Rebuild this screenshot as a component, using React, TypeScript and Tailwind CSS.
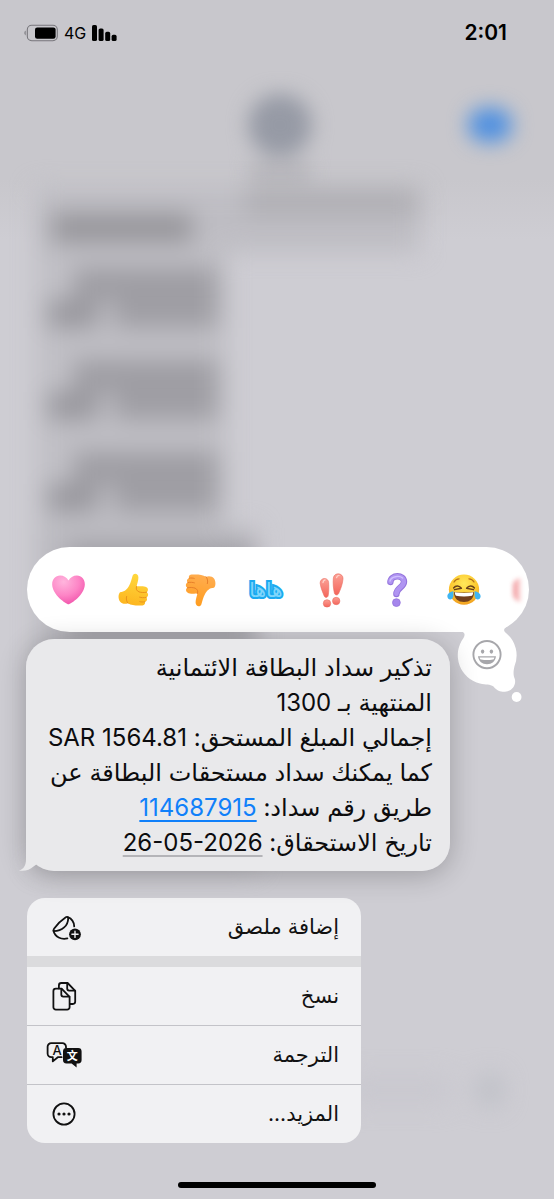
import type { ReactNode } from "react";

// ── Reaction drawings ────────────────────────────────────────────────
function HeartIcon() {
  return (
    <svg viewBox="0 0 36 36" className="h-[35px] w-[35px]" aria-hidden="true">
      <defs>
        <radialGradient id="heart" cx="35%" cy="22%" r="85%">
          <stop offset="0" stopColor="#ffb5dd" />
          <stop offset="0.55" stopColor="#fd85c6" />
          <stop offset="1" stopColor="#f04fa9" />
        </radialGradient>
      </defs>
      <path
        d="M18 33.2C15.6 33 1.2 23.4 1.2 12.6C1.2 7.2 4.7 3.6 9.3 3.6C13.2 3.6 16.4 5.7 18 8.8C19.6 5.7 22.8 3.6 26.7 3.6C31.3 3.6 34.8 7.2 34.8 12.6C34.8 23.4 20.4 33 18 33.2Z"
        fill="url(#heart)"
      />
    </svg>
  );
}

function ThumbShape({ id, from, to, shade }: { id: string; from: string; to: string; shade: string }) {
  return (
    <svg viewBox="0 0 36 36" className="h-9 w-9" aria-hidden="true">
      <defs>
        <linearGradient id={id} x1="0.6" y1="0" x2="0.4" y2="1">
          <stop offset="0" stopColor={from} />
          <stop offset="1" stopColor={to} />
        </linearGradient>
      </defs>
      <path
        d="M4 20.2C8.5 20 11 17.6 13.2 13.6C14.8 10.8 15.6 7 16.6 3.8C17.6 0.6 22.4 1.2 22.4 5.4C22.4 8.6 21.2 11.4 20.6 14.4C23.6 14.2 27 14.2 29.4 14.8C32.6 15.6 32.6 19.4 30.6 20.2C32.8 21.2 32.6 24.8 30.2 25.4C31.8 26.6 31 29.4 28.8 29.8C29.8 31.4 28.6 33.2 26.4 33.4C21.6 33.8 15.6 33.6 12 31.2C9 32.4 5.6 31.6 4 29.4C2.2 27 2 22.4 4 20.2Z"
        fill={`url(#${id})`}
      />
      <path
        d="M30.6 20.2C28 20.8 25.4 20.6 23.4 20M30.2 25.4C27.8 25.9 25.2 25.7 23.6 25.2M28.8 29.8C26.8 30.2 25 30 23.8 29.6M20.6 14.4C19.6 17 20.6 18.8 22.8 19.8M12 31.2C10.4 29.8 10 26.6 10.6 24.4"
        fill="none"
        stroke={shade}
        strokeWidth="1"
        strokeLinecap="round"
      />
    </svg>
  );
}

function ExclaimIcon() {
  return (
    <svg viewBox="0 0 36 36" className="h-9 w-9" aria-hidden="true">
      <defs>
        <linearGradient id="exclaim" x1="0" y1="0" x2="0" y2="1">
          <stop offset="0" stopColor="#fba095" />
          <stop offset="1" stopColor="#f4655b" />
        </linearGradient>
      </defs>
      <g fill="url(#exclaim)" stroke="#ea6d62" strokeWidth="0.6">
        <path d="M6.2 11.4C5.8 5.6 14 4.6 14.6 10.4C15 15.6 14.8 20.4 14.2 23.6C13.9 25.8 10.8 26 10.2 24C8.8 20.2 6.8 16.4 6.2 11.4Z" />
        <path d="M19.4 5.8C20.2 0 29.4 0.8 29 6.8C28.6 12.4 26.4 17.6 24.6 21.6C23.8 23.6 20.8 23.2 20.4 21.2C19.4 16.8 18.8 11.2 19.4 5.8Z" />
        <circle cx="13" cy="31.4" r="3.7" />
        <circle cx="22.2" cy="29" r="3.7" />
      </g>
      <path d="M9 10.5C9.2 8.8 10 8.2 11 8M22.6 5.6C23 4 24 3.4 25 3.4" stroke="#ffcfc7" strokeWidth="1.4" fill="none" strokeLinecap="round" />
    </svg>
  );
}

function QuestionIcon() {
  return (
    <svg viewBox="0 0 36 36" className="h-9 w-9" aria-hidden="true">
      <path d="M10.400 10C10.800 2.600 24 2.200 24 9.800C24 15.400 16.400 15.600 16.400 22" fill="none" stroke="#9474dc" strokeWidth="6.400" strokeLinecap="round" strokeLinejoin="round" />
      <path d="M10.400 9.800C10.800 2.800 23.800 2.400 23.800 9.800C23.800 15.200 16.400 15.400 16.400 21.800" fill="none" stroke="#b095f2" strokeWidth="4.600" strokeLinecap="round" strokeLinejoin="round" />
      <path d="M10 9C11 4.600 19 3 22.600 6" fill="none" stroke="#d0bfff" strokeWidth="1.400" strokeLinecap="round" />
      <circle cx="16.400" cy="30.600" r="3.900" fill="#a586ec" stroke="#9474dc" strokeWidth="0.800" />
    </svg>
  );
}

function JoyIcon() {
  return (
    <svg viewBox="0 0 36 36" className="h-[34px] w-[34px]" aria-hidden="true">
      <defs>
        <radialGradient id="joy" cx="50%" cy="30%" r="75%">
          <stop offset="0" stopColor="#ffe95a" />
          <stop offset="0.6" stopColor="#fcc72f" />
          <stop offset="1" stopColor="#ee961c" />
        </radialGradient>
      </defs>
      <circle cx="18" cy="17.6" r="16" fill="url(#joy)" />
      <path d="M7.4 9.6C8.6 7.4 10.6 6.2 12.8 6.2M28.6 9.6C27.4 7.4 25.4 6.2 23.2 6.2" stroke="#b8741a" strokeWidth="1.3" fill="none" strokeLinecap="round" />
      <path d="M7 15.8C9.2 13 12.8 13 15.2 16.2L8 17.600M29 15.800C26.800 13 23.200 13 20.800 16.200L28 17.600" stroke="#69411a" strokeWidth="1.600" fill="none" strokeLinecap="round" strokeLinejoin="round" />
      <path d="M7.4 20C13.8 21 22.2 21 28.6 20C28.8 27 24.2 30.6 18 30.6C11.8 30.6 7.2 27 7.4 20Z" fill="#72401d" />
      <path d="M8.2 20.4C14.2 21.4 21.8 21.4 27.8 20.4C27.6 22.6 27.2 23.6 26.4 24C21.4 25 14.6 25 9.6 24C8.8 23.6 8.4 22.6 8.2 20.4Z" fill="#fff" />
      <path d="M6.8 19.2C2.6 20 0.2 22 0.4 25C0.8 29.4 6.6 29 6.8 24.2ZM29.2 19.2C33.4 20 35.8 22 35.6 25C35.2 29.4 29.4 29 29.2 24.2Z" fill="#3fb5f2" />
    </svg>
  );
}

// ── Menu icons ───────────────────────────────────────────────────────
function MenuSvg({ children }: { children: ReactNode }) {
  return (
    <svg
      viewBox="0 0 40 40"
      className="h-10 w-10 shrink-0"
      fill="none"
      stroke="#111"
      strokeWidth="1.8"
      strokeLinecap="round"
      strokeLinejoin="round"
      aria-hidden="true"
    >
      {children}
    </svg>
  );
}

function StickerIcon() {
  return (
    <MenuSvg>
      <path d="M9.5 23.6C9.4 22.8 9.8 22.2 10.2 21.6C13.2 17.4 17.4 13.2 21.8 10.3C23 9.6 24.2 10 24.2 11.4C24 18.6 18.4 24 9.7 24.2" />
      <path d="M23.8 10.2C27.8 11.8 30 15.4 30.2 19.4M9.5 23.8C10.8 30 17.4 32.8 23.4 31.4" />
      <circle cx="31" cy="27.3" r="5.9" fill="#111" stroke="none" />
      <path d="M31 24.2V30.4M27.9 27.3H34.1" stroke="#f1f1f3" strokeWidth="1.4" />
    </MenuSvg>
  );
}

function CopyIcon() {
  return (
    <MenuSvg>
      <path d="M17.6 12.6H11.8A2.4 2.4 0 0 0 9.4 15V31.2A2.4 2.4 0 0 0 11.8 33.6H23.2A2.4 2.4 0 0 0 25.6 31.2V20.8Z" />
      <path d="M17.3 12.8V18.6A2 2 0 0 0 19.3 20.6H25.4" />
      <path d="M14.9 12.4V9.4A2.4 2.4 0 0 1 17.3 7H23.6L31.2 14.8V25.6A2.4 2.4 0 0 1 28.8 28H25.8" />
      <path d="M23.2 7.2V12.6A2 2 0 0 0 25.2 14.6H31" />
    </MenuSvg>
  );
}

function TranslateIcon() {
  return (
    <MenuSvg>
      <path d="M17.6 22.2H13.8L8.8 26.4V22.2H7.2A3.6 3.6 0 0 1 3.6 18.6V11.8A3.6 3.6 0 0 1 7.2 8.2H18.4A3.6 3.6 0 0 1 22 11.8V12.8" />
      <path
        d="M19 16.4A3.4 3.4 0 0 1 22.4 13H34.2A3.4 3.4 0 0 1 37.6 16.4V25A3.4 3.4 0 0 1 34.2 28.4H32.6V32.6L27.6 28.4H22.4A3.4 3.4 0 0 1 19 25Z"
        fill="#111"
        stroke="none"
      />
      <text x="13" y="20" textAnchor="middle" fontSize="13" fontWeight="500" fill="#111" stroke="none" fontFamily="Inter, sans-serif">A</text>
      <text x="28.2" y="25" textAnchor="middle" fontSize="11" fontWeight="700" fill="#fff" stroke="none" fontFamily="'Noto Sans CJK SC', sans-serif">文</text>
    </MenuSvg>
  );
}

function MoreIcon() {
  return (
    <MenuSvg>
      <circle cx="20" cy="20" r="10.6" />
      <g fill="#111" stroke="none">
        <circle cx="15" cy="20" r="1.6" />
        <circle cx="20" cy="20" r="1.6" />
        <circle cx="25" cy="20" r="1.6" />
      </g>
    </MenuSvg>
  );
}

// ── Blurred conversation behind the menu ─────────────────────────────
function Backdrop() {
  return (
    <div className="absolute inset-0 overflow-hidden bg-linear-to-b from-[#c8c7cc] from-15% to-[#cecdd3] to-20%" aria-hidden="true">
      <div className="flex h-[188px] items-start justify-between px-[38px] pt-[94px] blur-[10px]">
        <div className="w-[54px]" />
        <div className="flex flex-col items-center">
          <div className="h-[62px] w-[64px] rounded-full bg-[#969aa5]" />
          <div className="mt-1 h-7 w-[60px] bg-[#b8b7bc]" />
        </div>
        <div className="mt-[14px] mr-1 h-[34px] w-[44px] rounded-full bg-[#4f90e0]" />
      </div>
      <div className="px-9 blur-[12px]">
        <div className="h-[64px] w-[384px] bg-[#bebdc3]">
          <div className="ml-auto h-[26px] w-[175px] bg-[#aeadb2]" />
          <div className="ml-4 h-7 w-[140px] bg-[#959499]" />
        </div>
        {[0, 1, 2].map((n) => (
          <div key={n} className="flex h-[92px] w-[190px] flex-col items-end bg-[#c0bfc5] px-2 pt-4">
            <div className="h-8 w-[144px] bg-[#9e9da3]" />
            <div className="flex h-7 gap-4">
              <div className="w-[50px] bg-[#98979d]" />
              <div className="w-[104px] bg-[#9f9ea4]" />
            </div>
          </div>
        ))}
        <div className="h-[340px] w-[220px] bg-[#bbbac0] pt-4 pl-8">
          <div className="h-24 bg-[#9f9ea4]" />
        </div>
        <div className="mt-[206px] flex items-center justify-end gap-6">
          <div className="h-7 w-[110px] rounded-full bg-[#c9c8cf]" />
          <div className="mr-4 h-8 w-6 rounded-full bg-[#bcbec5]" />
        </div>
      </div>
    </div>
  );
}

function StatusBar() {
  return (
    <header className="flex h-[66px] items-center justify-between pr-[47px] pl-6">
      <div className="flex items-center gap-[6px]">
        <svg viewBox="0 0 34 18" className="h-[18px] w-[34px]" role="img" aria-label="Battery">
          <path d="M1.6 6.6C0 7.6 0 10.4 1.6 11.4Z" fill="#77767b" />
          <rect x="3.3" y="1.3" width="30" height="15.4" rx="4.4" fill="none" stroke="#77767b" strokeWidth="1.1" />
          <rect x="11" y="3.4" width="20.600" height="11.4" rx="2.2" fill="#000" />
        </svg>
        <span className="text-[16px] leading-5">4G</span>
        <svg viewBox="0 0 26 18" className="h-[18px] w-[26px]" role="img" aria-label="Signal">
          <rect x="0" y="1" width="5" height="16" rx="1.6" />
          <rect x="6.6" y="4.4" width="5" height="12.6" rx="1.6" />
          <rect x="13.2" y="7.8" width="5" height="9.2" rx="1.6" />
          <rect x="19.6" y="10.8" width="5" height="6.2" rx="1.6" />
        </svg>
      </div>
      <time className="text-[21px] leading-6 font-semibold">2:01</time>
    </header>
  );
}

const REACTIONS: { label: string; icon: ReactNode }[] = [
  { label: "قلب", icon: <HeartIcon /> },
  { label: "إعجاب", icon: <ThumbShape id="up" from="#ffd83d" to="#fdb51f" shade="#ea941b" /> },
  { label: "عدم إعجاب", icon: <span className="rotate-180"><ThumbShape id="down" from="#ff9d1f" to="#ffad50" shade="#e8802a" /></span> },
  {
    label: "هاها",
    icon: (
      <span className="text-[20px] leading-9 text-[#7fd6fb] [-webkit-text-stroke:4px_#1aaaf0] [paint-order:stroke_fill]" dir="rtl">
        هاها
      </span>
    ),
  },
  { label: "تعجب", icon: <ExclaimIcon /> },
  { label: "استفهام", icon: <QuestionIcon /> },
  { label: "ضحك", icon: <JoyIcon /> },
];

function ReactionBar() {
  return (
    <div className="relative mr-[25px] ml-[27px]">
      <div className="flex h-[85px] items-center overflow-hidden rounded-full bg-white pl-2">
        {REACTIONS.map((r) => (
          <button key={r.label} type="button" aria-label={r.label} className="flex w-[66px] shrink-0 items-center justify-center">
            {r.icon}
          </button>
        ))}
        <div className="ml-4 h-6 w-2 shrink-0 rounded-l-full bg-linear-to-r from-[#ee8f94] to-[#fbe3e4] blur-[2px]" />
      </div>
      <button type="button" aria-label="رموز تعبيرية" className="absolute top-[73px] right-0">
        <svg viewBox="451 620 78 84" className="h-[84px] w-[78px]" aria-hidden="true">
          <path
            d="M460 631C465 632 465.5 634.5 463.5 638A29 29 0 0 0 480 683.5C486 685 490 684 493.5 686.5C497 691 501 692 505 691.8C512 691.5 516.5 685 514.8 679C513.5 675.5 513 673 514.4 666.5A29 29 0 0 0 506 633C503 630.5 503.5 628.5 508 626Z"
            fill="#fff"
          />
          <circle cx="516.6" cy="697" r="4.9" fill="#fff" />
          <circle cx="487" cy="654.6" r="13.6" fill="none" stroke="#a7a7ab" strokeWidth="1.9" />
          <ellipse cx="482.6" cy="651.6" rx="1.7" ry="2.1" fill="#a7a7ab" />
          <ellipse cx="491.4" cy="651.6" rx="1.7" ry="2.1" fill="#a7a7ab" />
          <path d="M478 656.2H496C495.4 661.2 491.8 664.2 487 664.2C482.2 664.2 478.6 661.2 478 656.2Z" fill="#a7a7ab" />
          <path d="M479.6 657.4H494.4C494 658.8 493.6 659.4 492.8 659.6C489 660.3 485 660.3 481.2 659.6C480.4 659.4 480 658.8 479.6 657.4Z" fill="#fff" />
        </svg>
      </button>
    </div>
  );
}

function MessageBubble() {
  return (
    <div className="relative mt-[7px] ml-[26px] w-[424px] max-w-[85%]">
      <div className="absolute inset-0 rounded-[28px] shadow-[0_4px_28px_rgba(0,0,0,0.24)]" />
      <svg viewBox="0 0 32 32" className="absolute bottom-0 -left-2 h-8 w-8" aria-hidden="true">
        <path d="M8 0V20C8 26 6 30.5 0.8 31.4C6 32.6 12 31 15.5 27.5L26 20V0Z" fill="#e9e9eb" />
      </svg>
      <div dir="rtl" className="relative rounded-[28px] bg-[#e9e9eb] py-[11px] pr-[18px] pl-4 text-[24px] leading-[35px] text-[#0c0c0e]">
        <p>تذكير سداد البطاقة الائتمانية</p>
        <p>المنتهية بـ 1300</p>
        <p>
          إجمالي المبلغ المستحق: <bdi dir="ltr">SAR 1564.81</bdi>
        </p>
        <p>كما يمكنك سداد مستحقات البطاقة عن</p>
        <p>
          طريق رقم سداد:{" "}
          <a href="tel:114687915" className="text-[#1080fa] underline decoration-2 underline-offset-4">114687915</a>
        </p>
        <p>
          تاريخ الاستحقاق:{" "}
          <bdi dir="ltr" className="underline decoration-[#b4b4b8] decoration-2 underline-offset-4">26-05-2026</bdi>
        </p>
      </div>
    </div>
  );
}

function MenuItem({ label, icon }: { label: string; icon: ReactNode }) {
  return (
    <button type="button" role="menuitem" className="box-content flex h-[58px] w-[295px] items-center justify-between pr-[22px] pl-[17px] text-[21px] leading-7 text-[#111]">
      <span>{label}</span>
      {icon}
    </button>
  );
}

function ContextMenu() {
  return (
    <div dir="rtl" role="menu" className="mt-[27px] ml-[27px] w-[334px] overflow-hidden rounded-[18px] bg-[#f1f1f3]">
      <MenuItem label="إضافة ملصق" icon={<StickerIcon />} />
      <div className="h-[11px] bg-[#dbdbdd]" />
      <div className="divide-y divide-[#c3c3c8]">
        <MenuItem label="نسخ" icon={<CopyIcon />} />
        <MenuItem label="الترجمة" icon={<TranslateIcon />} />
        <MenuItem label="المزيد..." icon={<MoreIcon />} />
      </div>
    </div>
  );
}

export default function App() {
  return (
    <div lang="ar" className="relative min-h-screen font-[Inter,'DejaVu_Sans',sans-serif]">
      <Backdrop />
      <div className="relative flex min-h-screen flex-col">
        <StatusBar />
        <main className="flex flex-1 flex-col justify-end pb-[39px]">
          <ReactionBar />
          <MessageBubble />
          <ContextMenu />
        </main>
        <div className="mx-auto mb-[11px] h-[6px] w-[198px] rounded-full bg-black" />
      </div>
    </div>
  );
}
